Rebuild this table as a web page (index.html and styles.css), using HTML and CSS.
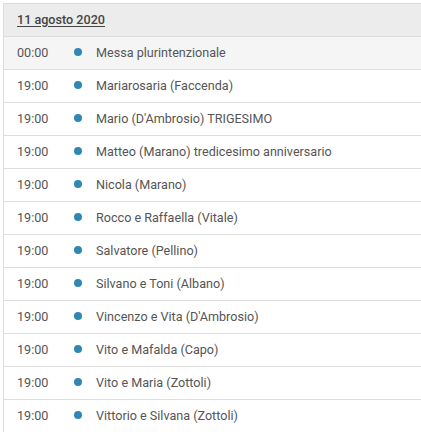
FILE: index.html
```html
<!DOCTYPE html>
<html lang="it">
<head>
<meta charset="utf-8">
<link rel="stylesheet" href="styles.css">
</head>
<body>
<div class="agenda">
  <div class="day"><a class="day-link">11 agosto 2020</a></div>
  <div class="row alt"><span class="time">00:00</span><span class="dot"></span><span class="title">Messa plurintenzionale</span></div>
  <div class="row"><span class="time">19:00</span><span class="dot"></span><span class="title">Mariarosaria (Faccenda)</span></div>
  <div class="row"><span class="time">19:00</span><span class="dot"></span><span class="title">Mario (D'Ambrosio) TRIGESIMO</span></div>
  <div class="row"><span class="time">19:00</span><span class="dot"></span><span class="title">Matteo (Marano) tredicesimo anniversario</span></div>
  <div class="row"><span class="time">19:00</span><span class="dot"></span><span class="title">Nicola (Marano)</span></div>
  <div class="row"><span class="time">19:00</span><span class="dot"></span><span class="title">Rocco e Raffaella (Vitale)</span></div>
  <div class="row"><span class="time">19:00</span><span class="dot"></span><span class="title">Salvatore (Pellino)</span></div>
  <div class="row"><span class="time">19:00</span><span class="dot"></span><span class="title">Silvano e Toni (Albano)</span></div>
  <div class="row"><span class="time">19:00</span><span class="dot"></span><span class="title">Vincenzo e Vita (D'Ambrosio)</span></div>
  <div class="row"><span class="time">19:00</span><span class="dot"></span><span class="title">Vito e Mafalda (Capo)</span></div>
  <div class="row"><span class="time">19:00</span><span class="dot"></span><span class="title">Vito e Maria (Zottoli)</span></div>
  <div class="row"><span class="time">19:00</span><span class="dot"></span><span class="title">Vittorio e Silvana (Zottoli)</span></div>
</div>
</body>
</html>
```
FILE: styles.css
```css
html, body {
  margin: 0;
  padding: 0;
  background: #fff;
  overflow: hidden;
}
body {
  padding: 3px 0 0 3px;
  font-family: Roboto, "Liberation Sans", sans-serif;
  font-size: 12.6px;
  color: #555;
}
.agenda {
  border-top: 1px solid #dcdcdc;
  border-left: 1px solid #dcdcdc;
}
.day,
.row {
  box-sizing: border-box;
  height: 33px;
  display: flex;
  align-items: center;
  padding: 0 0 2px 13px;
}
.day {
  background: #ececec;
  border-bottom: 1px solid #dcdcdc;
}
.day-link {
  color: #444;
  font-weight: 500;
  text-decoration: underline;
  text-underline-offset: 2px;
}
.row {
  border-bottom: 1px solid #dedede;
}
.row.alt {
  background: #f5f5f5;
}
.time {
  width: 57px;
}
.dot {
  width: 8px;
  height: 8px;
  border-radius: 50%;
  background: #3087b4;
  margin-right: 14px;
}
.title {
  color: #555;
}
```
